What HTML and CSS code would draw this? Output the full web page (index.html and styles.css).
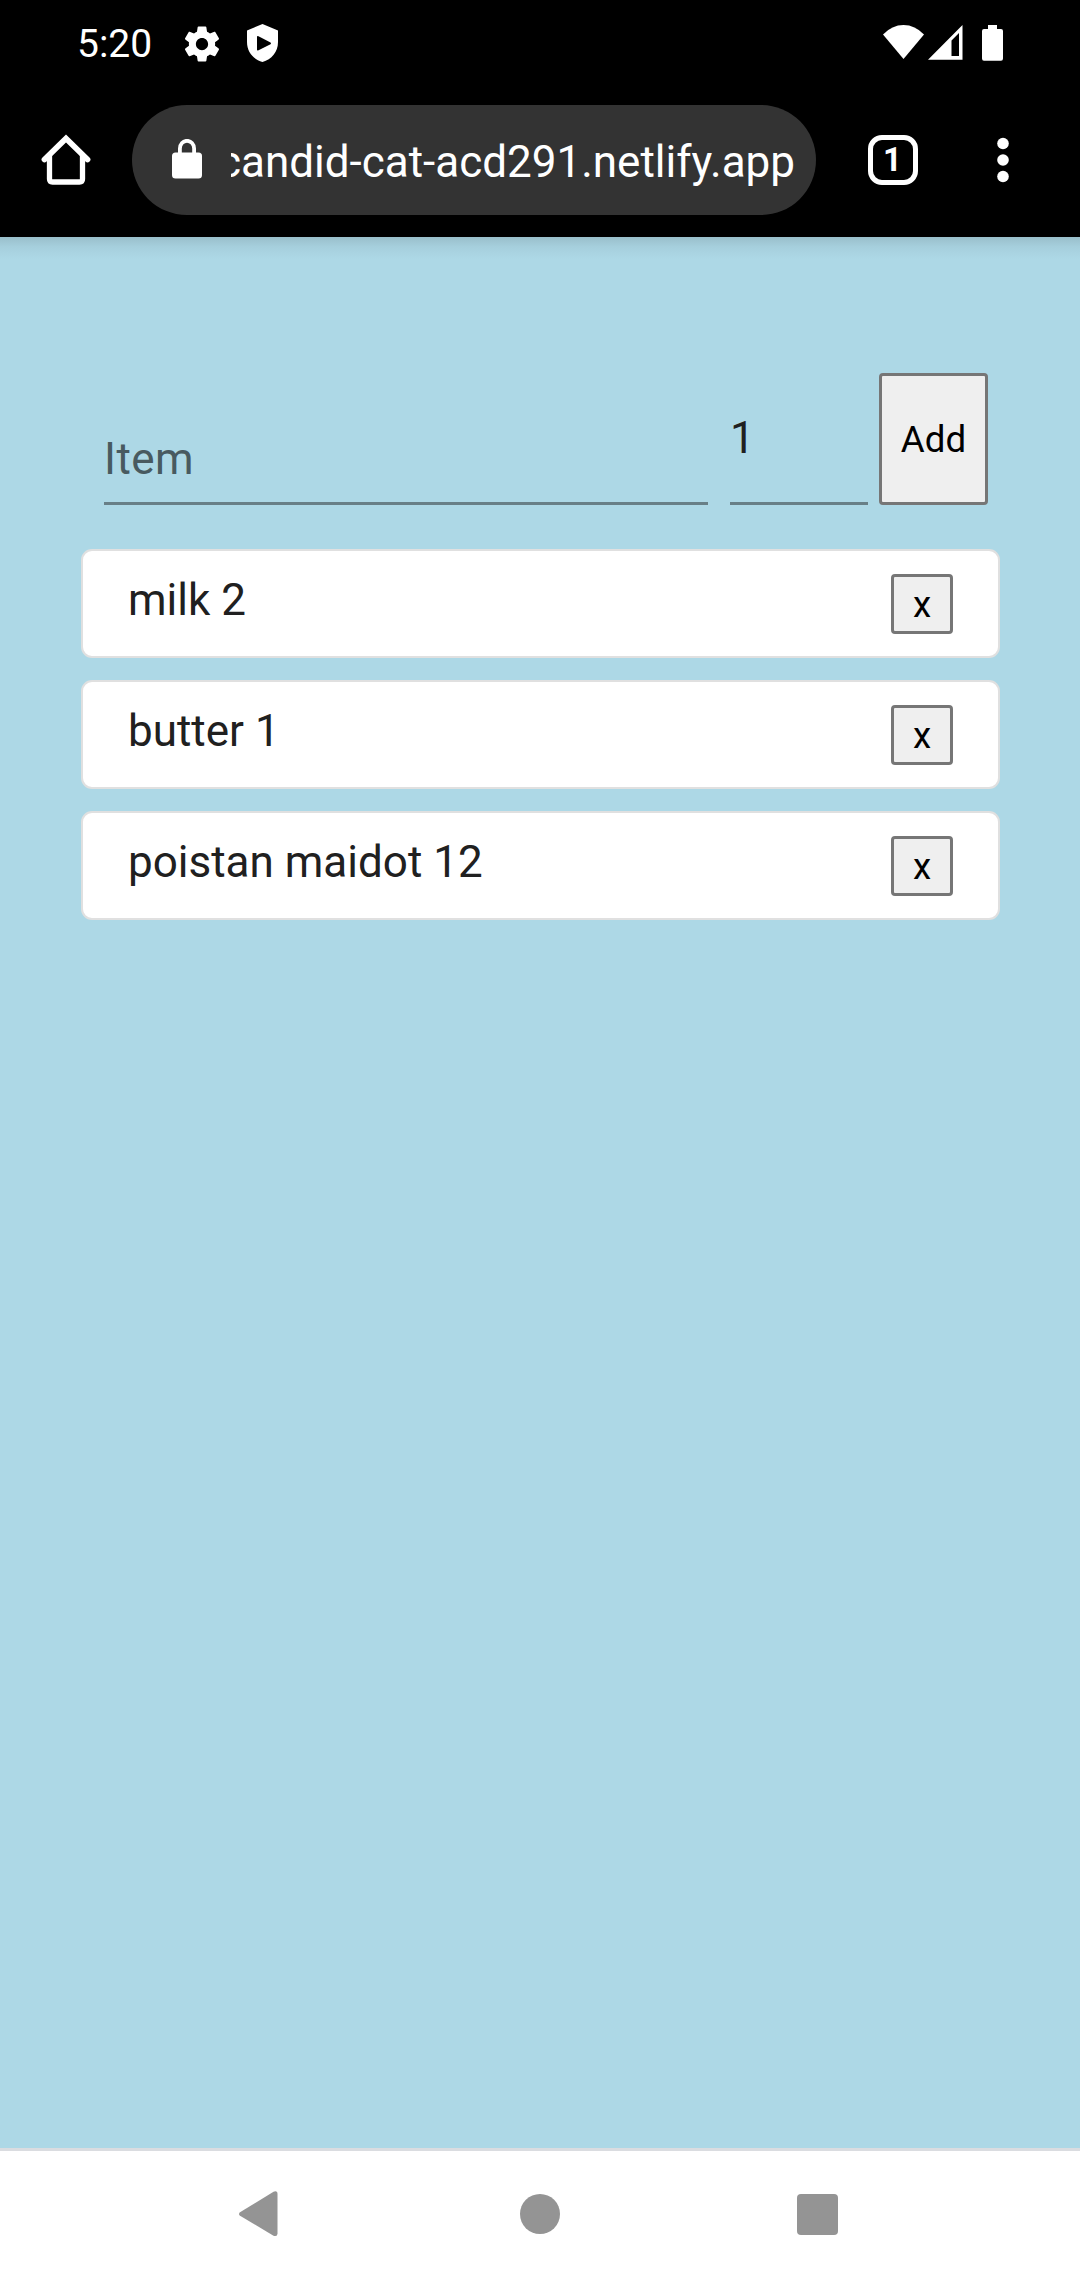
FILE: index.html
```html
<!DOCTYPE html>
<html lang="en">
<head>
<meta charset="utf-8">
<title>Shopping list</title>
<link rel="stylesheet" href="styles.css">
</head>
<body>
<div class="screen">
  <header class="top">
    <div class="status">
      <span class="time">5:20</span>
      <svg class="gear" width="42" height="42" viewBox="0 0 24 24"><path d="M19.43 12.98c.04-.32.07-.64.07-.98s-.03-.66-.07-.98l2.11-1.65c.19-.15.24-.42.12-.64l-2-3.46c-.12-.22-.39-.3-.61-.22l-2.49 1c-.52-.4-1.08-.73-1.69-.98l-.38-2.65C14.46 2.18 14.25 2 14 2h-4c-.25 0-.46.18-.49.42l-.38 2.65c-.61.25-1.17.59-1.69.98l-2.49-1c-.23-.09-.49 0-.61.22l-2 3.46c-.13.22-.07.49.12.64l2.11 1.65c-.04.32-.07.65-.07.98s.03.66.07.98l-2.11 1.65c-.19.15-.24.42-.12.64l2 3.46c.12.22.39.3.61.22l2.49-1c.52.4 1.08.73 1.69.98l.38 2.65c.03.24.24.42.49.42h4c.25 0 .46-.18.49-.42l.38-2.65c.61-.25 1.17-.59 1.69-.98l2.49 1c.23.09.49 0 .61-.22l2-3.46c.12-.22.07-.49-.12-.64l-2.11-1.65zM12 15.5c-1.93 0-3.5-1.57-3.5-3.5s1.57-3.5 3.5-3.5 3.5 1.57 3.5 3.5-1.57 3.5-3.5 3.5z"/></svg>
      <svg class="shield" width="32" height="38" viewBox="0 0 32 38"><path fill-rule="evenodd" d="M15.500 0L31 6.500V18C31 28 24.500 35.500 15.500 38C6.500 35.500 0 28 0 18V6.500ZM10 13V25.500Q10 27 11.500 26.200L23.500 20.200Q24.500 19.300 23.500 18.400L11.500 12.200Q10 11.500 10 13Z"/></svg>
      <svg class="wifi" width="41" height="34" viewBox="0 0 41 34"><path d="M0 9.500Q9 0 20.500 0T41 9.500L20.500 34Z"/></svg>
      <svg class="signal" width="35" height="35" viewBox="0 0 35 35"><path fill-rule="evenodd" d="M0 34.700L34.500 0V34.700ZM23.500 15.500V31H31V8Z"/></svg>
      <svg class="battery" width="21" height="36" viewBox="0 0 21 36"><path d="M6 0H15V4H19Q21 4 21 6V33.500Q21 35.700 19 35.700H2Q0 35.700 0 33.500V6Q0 4 2 4H6Z"/></svg>
    </div>
    <div class="toolbar">
      <svg class="home" width="52" height="52" viewBox="0 0 52 52"><path class="line" d="M4.500 25.500L26 4.500L47.500 25.500" stroke-width="5.800" stroke-linecap="round"/><path class="line" d="M9.500 21V45Q9.500 48 12.500 48H39.500Q42.500 48 42.500 45V21" stroke-width="5.300"/></svg>
      <div class="address">
        <svg class="lock" width="30" height="40" viewBox="0 0 30 40"><rect y="13.500" width="30" height="26" rx="3.500"/><path class="line" d="M7.900 15V9.500A7.100 7.700 0 0 1 22.100 9.500V15" stroke-width="3.800"/></svg>
        <div class="url"><span>candid-cat-acd291.netlify.app</span></div>
      </div>
      <div class="tabs">1</div>
      <svg class="more" width="12" height="46" viewBox="0 0 12 46"><circle cx="6" cy="6.500" r="5.800"/><circle cx="6" cy="23" r="5.800"/><circle cx="6" cy="39.500" r="5.800"/></svg>
    </div>
  </header>
  <main class="page">
    <form class="form">
      <div class="field item">Item</div>
      <div class="field amount">1</div>
      <button class="button add" type="button">Add</button>
    </form>
    <ul class="list">
      <li class="card"><span>milk 2</span><button class="button remove" type="button">x</button></li>
      <li class="card"><span>butter 1</span><button class="button remove" type="button">x</button></li>
      <li class="card"><span>poistan maidot 12</span><button class="button remove" type="button">x</button></li>
    </ul>
  </main>
  <nav class="nav">
    <svg width="39" height="46" viewBox="0 0 39 46"><path d="M1 21.200L34.500.7Q38.500-.8 38.500 3V42.500Q38.500 46 34.500 44.700L1 24.800Q-1 23 1 21.200Z"/></svg>
    <svg width="40" height="42" viewBox="0 0 40 42"><circle cx="20" cy="21" r="20"/></svg>
    <svg width="41" height="41" viewBox="0 0 41 41"><rect width="41" height="41" rx="4"/></svg>
  </nav>
</div>
</body>
</html>
```
FILE: styles.css
```css
* { box-sizing: border-box; }
body { margin: 0; font-family: Roboto, sans-serif; }
svg { display: block; flex: none; }
.screen { width: 1080px; height: 2280px; display: flex; flex-direction: column; background: #add8e6; overflow: hidden; }

.top { height: 237px; flex: none; background: #000; color: #fff; }
.top svg { fill: #fff; }
.top .line { fill: none; stroke: #fff; }
.status { height: 87px; display: flex; align-items: center; padding: 0 77px 0 77px; }
.time { width: 104px; font-size: 39px; line-height: 45px; margin-top: 1px; }
.shield { margin-left: 24px; margin-top: -1px; }
.wifi { margin-left: auto; margin-right: 4px; margin-top: -3px; }
.signal { margin-right: 19px; margin-top: -2px; }
.battery { margin-top: -1px; }
.status { padding-right: 77px; }
.toolbar { height: 146px; display: flex; align-items: center; padding-left: 40px; }
.address { width: 684px; height: 110px; margin-left: 40px; border-radius: 55px; background: #333; display: flex; align-items: center; padding-left: 40px; }
.lock { margin-top: -2px; }
.url { width: 564px; height: 66px; margin: 4px 0 0 29px; overflow: hidden; display: flex; justify-content: flex-end; font-size: 44px; line-height: 66px; white-space: nowrap; }
.tabs { width: 50px; height: 50px; margin-left: 52px; border: 5.5px solid #fff; border-radius: 14px; font-size: 33px; line-height: 40px; font-weight: 700; text-align: center; text-indent: -1px; }
.more { margin-left: 79px; }

.page { flex: 1; padding: 136px 80px 0 81px; color: #202020; background: linear-gradient(#99bfcb, #a6cfdd 10px, #add8e6 22px); font-size: 44px; }
.form { display: flex; height: 132px; padding: 0 11px 0 23px; letter-spacing: .00938em; }
.field { border-bottom: 3px solid #687f87; }
.item { width: 604px; padding-top: 53px; line-height: 66px; color: #485a60; }
.amount { width: 138px; margin-left: 22px; padding-top: 32px; line-height: 66px; }
.button { padding: 0; border: 3px solid #767676; border-radius: 4px; background: #efefef; color: #000; font: 36.67px Roboto, sans-serif; letter-spacing: normal; text-align: center; }
.add { width: 109px; margin-left: 11px; }
.list { list-style: none; margin: 44px 0 0; padding: 0; display: flex; flex-direction: column; gap: 22px; }
.card { height: 109px; display: flex; justify-content: space-between; padding: 16px 45px 0 45px; background: #fff; border: 2px solid #e0e0e0; border-radius: 11px; line-height: 66px; }
.remove { width: 62px; height: 60px; margin-top: 7px; }

.nav { height: 132px; flex: none; display: flex; align-items: center; gap: 237px; padding: 0 0 3px 239px; background: #fff; border-top: 3px solid #dadce0; fill: #949494; }
.nav svg:nth-child(2) { margin-left: 5px; }
```
